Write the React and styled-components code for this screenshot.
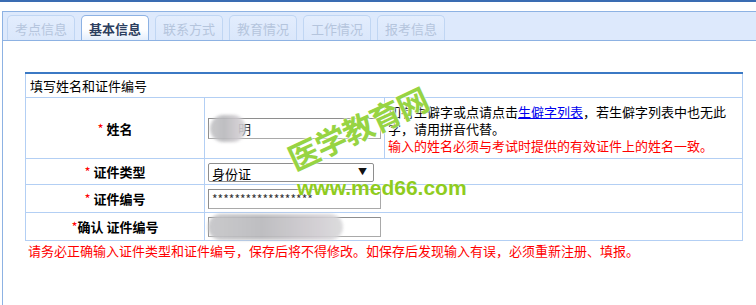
import styled, { createGlobalStyle } from "styled-components";

const GlobalStyle = createGlobalStyle`
  html, body {
    margin: 0;
    padding: 0;
    background: #fff;
    font-family: "Noto Sans CJK SC", "Liberation Sans", sans-serif;
    font-size: 13px;
    color: #000;
  }
`;

const tabs = ["考点信息", "基本信息", "联系方式", "教育情况", "工作情况", "报考信息"];

const App = () => {
  return (
    <>
      <GlobalStyle />
      <TopLine />
      <Frame>
        <TabBar>
          {tabs.map((t, i) => (
            <Tab key={t} $active={i === 1}>
              {t}
            </Tab>
          ))}
        </TabBar>
        <Panel>
          <FormTable>
            <colgroup>
              <col style={{ width: 179 }} />
              <col style={{ width: 180 }} />
              <col style={{ width: 358 }} />
            </colgroup>
            <tbody>
              <tr>
                <HeadCell colSpan={3}>填写姓名和证件编号</HeadCell>
              </tr>
              <tr>
                <LabelCell $h={61}>
                  <Star>*</Star> 姓名
                </LabelCell>
                <InputCell>
                  <Field>
                    <TextBox $w={173} $h={21} defaultValue="" />
                    <Typed $left={30}>明</Typed>
                    <Blur $left={2} $top={-3} $w={36} $h={27} />
                  </Field>
                </InputCell>
                <HintCell>
                  如有生僻字或点请点击<HintLink href="#">生僻字列表</HintLink>，若生僻字列表中也无此字，请用拼音代替。
                  <br />
                  <RedText>输入的姓名必须与考试时提供的有效证件上的姓名一致。</RedText>
                </HintCell>
              </tr>
              <tr>
                <LabelCell $h={26}>
                  <Star>*</Star> 证件类型
                </LabelCell>
                <InputCell colSpan={2}>
                  <Field>
                    <SelectBox defaultValue="sfz">
                      <option value="sfz">身份证</option>
                    </SelectBox>
                    <Arrow>▼</Arrow>
                  </Field>
                </InputCell>
              </tr>
              <tr>
                <LabelCell $h={28}>
                  <Star>*</Star> 证件编号
                </LabelCell>
                <InputCell colSpan={2}>
                  <TextBox $w={173} $h={20} $small defaultValue="******************" />
                </InputCell>
              </tr>
              <tr>
                <LabelCell $h={28}>
                  <Star>*</Star>确认 证件编号
                </LabelCell>
                <InputCell colSpan={2}>
                  <Field>
                    <TextBox $w={173} $h={20} defaultValue="" />
                    <Blur $left={0} $top={-3} $w={135} $h={26} />
                  </Field>
                </InputCell>
              </tr>
            </tbody>
          </FormTable>
          <Notice>请务必正确输入证件类型和证件编号，保存后将不得修改。如保存后发现输入有误，必须重新注册、填报。</Notice>
          <MarkTitle>医学教育网</MarkTitle>
          <MarkUrl>www.med66.com</MarkUrl>
        </Panel>
      </Frame>
    </>
  );
};

export default App;

const TopLine = styled.div`
  height: 2px;
  background: #3a6cb2;
  margin-bottom: 9px;
`;

const Frame = styled.div`
  margin-left: 2px;
  border-left: 1px solid #8db2e3;
  height: 294px;
`;

const TabBar = styled.div`
  display: flex;
  align-items: flex-end;
  gap: 6px;
  height: 28px;
  padding-left: 4px;
  background: #dde9fc;
  border-top: 1px solid #8db2e3;
  border-bottom: 1px solid #8db2e3;
`;

const Tab = styled.div`
  width: 68px;
  height: 25px;
  box-sizing: border-box;
  display: flex;
  align-items: center;
  justify-content: center;
  border: 1px solid ${(p) => (p.$active ? "#8db2e3" : "#c0d6f3")};
  border-bottom: none;
  border-radius: 5px 5px 0 0;
  background: ${(p) =>
    p.$active
      ? "linear-gradient(#ffffff 0%, #ffffff 55%, #e4eefc 100%)"
      : "linear-gradient(#e3edfd, #dae7fb)"};
  color: ${(p) => (p.$active ? "#2d3f5f" : "#b5c5dd")};
  font-weight: ${(p) => (p.$active ? "bold" : "normal")};
  font-size: 13px;
`;

const Panel = styled.div`
  position: relative;
  padding: 31px 0 0 22px;
`;

const FormTable = styled.table`
  width: 718px;
  border-collapse: collapse;
  border: 1px solid #b3cff4;
  border-top: 2px solid #3b79c4;
  table-layout: fixed;
`;

const HeadCell = styled.td`
  height: 23px;
  padding: 0 4px;
  border: 1px solid #b3cff4;
  border-top: none;
  line-height: 17px;
`;

const LabelCell = styled.td`
  height: ${(p) => p.$h - 1}px;
  padding: 0;
  text-align: center;
  font-weight: bold;
  border: 1px solid #b3cff4;
  vertical-align: middle;
`;

const Star = styled.span`
  color: #f00;
  font-weight: normal;
`;

const InputCell = styled.td`
  padding: 0 0 0 3px;
  border: 1px solid #b3cff4;
  vertical-align: middle;
`;

const HintCell = styled.td`
  padding: 2px 8px 2px 3px;
  border: 1px solid #b3cff4;
  line-height: 17px;
  vertical-align: middle;
`;

const HintLink = styled.a`
  color: #0000ee;
  text-decoration: underline;
`;

const RedText = styled.span`
  color: #f00;
`;

const Field = styled.div`
  position: relative;
  display: inline-block;
  vertical-align: middle;
`;

const TextBox = styled.input`
  display: block;
  box-sizing: border-box;
  width: ${(p) => p.$w}px;
  height: ${(p) => p.$h}px;
  margin: 0;
  padding: 0 3px;
  border: 1px solid #a9a9a9;
  border-top-color: #8e8e8e;
  border-left-color: #8e8e8e;
  font-family: inherit;
  font-size: ${(p) => (p.$small ? "12px" : "13px")};
  color: #333;
  background: #fff;
  outline: none;
`;

const Typed = styled.span`
  position: absolute;
  left: ${(p) => p.$left}px;
  top: 1px;
  line-height: 19px;
  color: #222;
`;

const Blur = styled.span`
  position: absolute;
  left: ${(p) => p.$left}px;
  top: ${(p) => p.$top}px;
  width: ${(p) => p.$w}px;
  height: ${(p) => p.$h}px;
  border-radius: 14px;
  background: linear-gradient(90deg, #c4c4c7, #b8b8bb 40%, #cfcbd0 80%, #d8d8da);
  filter: blur(1.5px);
  opacity: 0.9;
`;

const SelectBox = styled.select`
  display: block;
  box-sizing: border-box;
  width: 166px;
  height: 19px;
  margin: 0;
  padding: 0 0 0 3px;
  border: 1px solid #8e8e8e;
  border-radius: 2px;
  background: #fff;
  appearance: none;
  font-family: inherit;
  font-size: 13px;
  color: #000;
  outline: none;
`;

const Arrow = styled.span`
  position: absolute;
  right: 7px;
  top: 2px;
  font-size: 9px;
  line-height: 14px;
  color: #111;
  pointer-events: none;
`;

const Notice = styled.div`
  margin-top: 1px;
  padding-left: 3px;
  line-height: 17px;
  color: #f00;
`;

const MarkTitle = styled.div`
  position: absolute;
  left: 294px;
  top: 99px;
  line-height: 36px;
  white-space: nowrap;
  font-size: 31px;
  font-weight: bold;
  color: #97d443;
  letter-spacing: -1px;
  transform: rotate(-25deg);
  transform-origin: 0 100%;
  text-shadow: 0 0 2px #fff, 0 0 2px #fff;
  pointer-events: none;
`;

const MarkUrl = styled.div`
  position: absolute;
  left: 294px;
  top: 135px;
  line-height: 24px;
  white-space: nowrap;
  font-family: "Liberation Sans", sans-serif;
  font-size: 21px;
  font-weight: bold;
  color: #8fcc1e;
  text-shadow: 0 0 2px #fff;
  pointer-events: none;
`;
